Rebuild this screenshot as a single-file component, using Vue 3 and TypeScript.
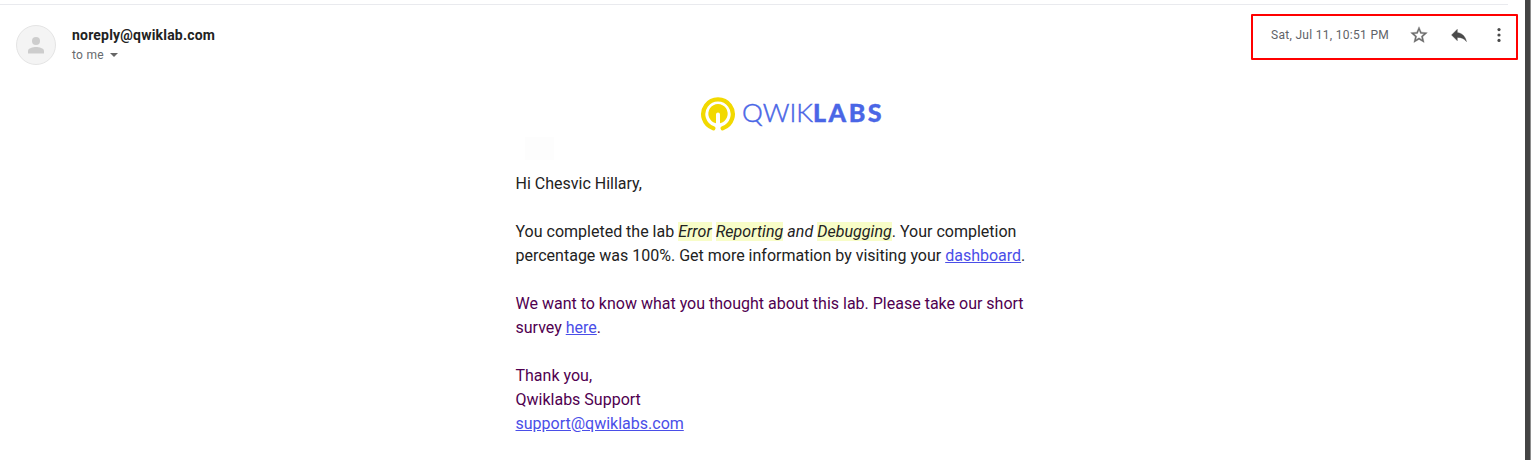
<script setup lang="ts">
const sender = 'noreply@qwiklab.com'
const received = 'Sat, Jul 11, 10:51 PM'
</script>

<template>
  <main class="mail">
    <header class="head">
      <svg class="avatar" width="40" height="40" viewBox="0 0 40 40">
        <circle cx="20" cy="20" r="19.5" fill="#f4f4f4" stroke="#e4e4e4" />
        <circle cx="20" cy="16" r="4" fill="#cdcdcd" />
        <path d="M12 28.500V26C12 23 17 22 20 22S28 23 28 26V28.500Z" fill="#cdcdcd" />
      </svg>
      <div class="from">
        <div class="name">{{ sender }}</div>
        <div class="to">
          <span>to me</span>
          <svg width="8" height="4" viewBox="0 0 8 4"><path d="M0 0H8L4 4Z" fill="#666" /></svg>
        </div>
      </div>
      <div class="actions">
        <span class="date">{{ received }}</span>
        <svg class="star" width="20" height="20" viewBox="0 0 24 24">
          <path fill="#6c6c6c" stroke="#6c6c6c" stroke-width=".4" d="M22 9.24l-7.19-.62L12 2 9.19 8.63 2 9.24l5.46 4.73L5.82 21 12 17.27 18.18 21l-1.63-7.03L22 9.24zM12 15.4l-3.76 2.27 1-4.28-3.32-2.88 4.38-.38L12 6.1l1.71 4.04 4.38.38-3.32 2.88 1 4.28L12 15.4z" />
        </svg>
        <svg class="reply" width="20" height="20" viewBox="0 0 24 24">
          <path fill="#4a4a4a" stroke="#4a4a4a" stroke-width=".4" d="M10 9V5l-7 7 7 7v-4.100c5 0 8.500 1.600 11 5.100-1-5-4-10-11-11z" />
        </svg>
        <svg class="more" width="20" height="20" viewBox="0 0 20 20" fill="#4a4a4a">
          <circle cx="10" cy="4.600" r="1.600" />
          <circle cx="10" cy="10" r="1.600" />
          <circle cx="10" cy="15.400" r="1.600" />
        </svg>
      </div>
    </header>
    <article class="body">
      <svg class="logo" width="182" height="36" viewBox="0 0 182 36">
        <path d="M13.300 32.200A14.800 14.800 0 1 1 22.700 32.200" fill="none" stroke="#f2d900" stroke-width="4.300" stroke-linecap="round" />
        <path d="M16 27.200V18.500a2 2 0 0 1 4 0V27.200A9.700 9.700 0 1 0 16 27.200Z" fill="#f2d900" />
        <g font-family="Lato, sans-serif" font-size="25" fill="#4a66e6" stroke="#4a66e6">
          <text x="42" y="25.500" font-weight="300" stroke-width=".45" textLength="71" lengthAdjust="spacingAndGlyphs">QWIK</text>
          <text x="113" y="25.500" font-weight="900" stroke-width=".4" textLength="68.500">LABS</text>
        </g>
      </svg>
      <div class="download"></div>
      <p>Hi Chesvic Hillary,</p>
      <p>
        You completed the lab <em><mark>Error</mark> <mark>Reporting</mark> and <mark>Debugging</mark></em>. Your completion<br />
        percentage was 100%. Get more information by visiting your <a>dashboard</a>.
      </p>
      <p class="quoted">
        We want to know what you thought about this lab. Please take our short<br />
        survey <a>here</a>.
      </p>
      <p class="quoted">
        Thank you,<br />
        Qwiklabs Support<br />
        <a>support@qwiklabs.com</a>
      </p>
    </article>
  </main>
</template>

<style>
body {
  margin: 0;
  background: #fff;
}
</style>

<style scoped>
.mail {
  box-sizing: border-box;
  width: 1531px;
  height: 460px;
  overflow: hidden;
  padding-top: 4px;
  border-right: 1px solid #8e8e8e;
  box-shadow: inset -5px 0 #444;
  font-family: Roboto, sans-serif;
  color: #222;
}
.head {
  display: flex;
  box-sizing: border-box;
  width: 1508px;
  height: 92px;
  padding-left: 16px;
  border-top: 1px solid #e9eaee;
}
.avatar {
  margin-top: 20px;
}
.from {
  margin: 20px 0 0 16px;
}
.name {
  font-size: 14px;
  line-height: 20px;
  font-weight: 700;
  letter-spacing: 0.2px;
}
.to {
  display: flex;
  align-items: center;
  gap: 6px;
  font-size: 12px;
  line-height: 20px;
  letter-spacing: 0.3px;
  color: #666a6e;
}
.actions {
  display: flex;
  align-items: center;
  box-sizing: border-box;
  flex: none;
  width: 267px;
  height: 46px;
  margin: 9px -10px 0 auto;
  padding: 0 7px 4px 18px;
  border: 2px solid #f00;
  border-radius: 1px;
}
.date {
  flex: none;
  width: 138px;
  font-size: 12px;
  line-height: 20px;
  letter-spacing: 0.3px;
  color: #5f6368;
}
.star,
.reply {
  flex: none;
  margin-right: 20px;
}
.more {
  flex: none;
}
.body {
  width: 550px;
  margin-left: 515.5px;
  font-size: 16px;
  line-height: 24px;
  white-space: nowrap;
}
.logo {
  display: block;
  margin: 0 0 5px 184.500px;
}
.download {
  width: 29px;
  height: 23px;
  margin: 0 0 12px 9.500px;
  background: #fdfdfd;
}
p {
  margin: 0 0 24px;
}
em {
  letter-spacing: 0.05px;
}
mark {
  color: inherit;
  background: #f8fdc8;
}
a {
  color: #4a4ee8;
  text-decoration: underline;
}
.quoted {
  color: #500050;
}
</style>
